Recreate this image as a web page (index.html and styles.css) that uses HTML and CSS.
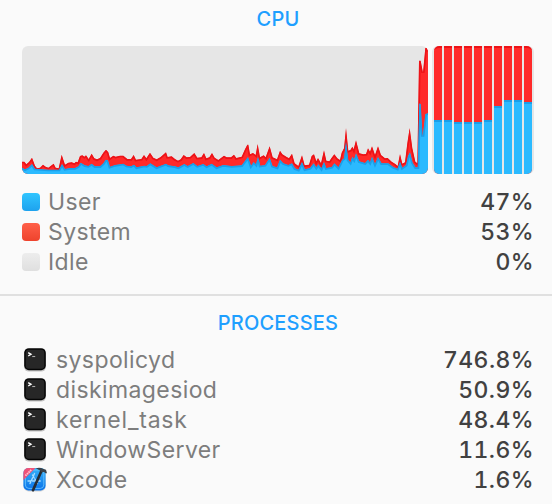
FILE: index.html
```html
<!DOCTYPE html>
<html lang="en">
<head>
<meta charset="utf-8">
<title>CPU</title>
<link rel="stylesheet" href="styles.css">
</head>
<body>
<svg class="defs" aria-hidden="true">
  <defs>
    <linearGradient id="face" x1="0" y1="0" x2="0" y2="1"><stop offset="0" stop-color="#38b4f8"/><stop offset="1" stop-color="#0870e8"/></linearGradient>
    <clipPath id="tile"><rect x=".4" y="1" width="22.2" height="22.4" rx="5"/></clipPath>
    <symbol id="terminal" viewBox="0 0 24 26">
      <rect x="1" y="2" width="22" height="22.6" rx="5" fill="#000" opacity=".22"/>
      <rect x="1.2" y="1.2" width="21.6" height="22" rx="4.6" fill="#050505"/>
      <rect x="2.7" y="2.7" width="18.6" height="19" rx="3" fill="#272727"/>
      <path d="M5.2 5.6 8 7.3 5.2 9" fill="none" stroke="#fff" stroke-width="1.4"/>
      <path d="M9.2 9.5h3" stroke="#aaa" stroke-width="1.1"/>
    </symbol>
    <symbol id="xcode" viewBox="0 0 24 26">
      <rect x=".6" y="2" width="22" height="22.5" rx="5" fill="#000" opacity=".15"/>
      <g clip-path="url(#tile)">
        <rect width="24" height="24" fill="url(#face)"/>
        <rect x="2.4" y="3" width="18.4" height="18.4" rx="3.5" fill="none" stroke="#70c8ff" stroke-width=".8"/>
        <path d="M11.5 6.5 7 16.5M9.5 8l5 8.5M5 14h13" fill="none" stroke="#a5dcff" stroke-width="1.4" stroke-linecap="round" stroke-dasharray="3 1.6"/>
        <path d="M0 1h12.5L0 13.500z" fill="#ef5278"/>
        <path d="M2.4 8.7 8.5 2.7" stroke="#ffc6d5" stroke-width="1.8" stroke-dasharray="1.6 .6"/>
      </g>
      <path d="M18.4 4 10 23.2" stroke="#262d35" stroke-width="2.7" stroke-linecap="round"/>
      <path d="M12.8 1.2c2.8-.9 5.2-.7 7.200.6l3 1 1 3.400-1.600.1-1.200-1.300-2.600.2-2-2z" fill="#39424b"/>
    </symbol>
  </defs>
</svg>
<main class="panel">
  <section class="cpu">
    <h2 class="title">CPU</h2>
    <div class="graphs">
      <svg class="history" viewBox="0 0 1218 384" preserveAspectRatio="none">
        <defs>
          <path id="total" d="M0 347 7 347 13 355 21 348 30 335 39 359 45 367 54 365 63 356 71 362 79 365 95 353 101 365 110 367 119 326 129 356 139 350 149 349 157 352 162 347 167 349 174 330 181 328 187 332 192 328 200 339 209 323 217 337 225 340 234 336 244 320 252 311 259 319 264 336 274 329 281 332 294 329 304 329 316 339 327 339 335 327 342 341 358 339 366 327 373 337 384 320 394 335 404 340 416 333 432 319 437 333 449 331 459 339 468 344 476 340 485 327 494 334 504 333 517 321 526 335 538 334 546 321 553 337 562 334 570 321 578 335 589 342 606 329 614 334 627 334 636 326 643 336 659 332 669 310 676 296 679 296 684 325 693 321 701 327 707 294 714 334 725 328 731 334 743 301 752 334 765 340 774 314 781 325 794 333 801 337 810 323 818 352 829 360 840 328 848 358 861 356 869 330 876 325 883 346 888 336 897 352 906 313 913 344 922 346 929 335 937 325 946 337 954 342 959 320 966 307 972 246 979 314 985 312 991 302 995 310 1002 283 1012 322 1024 325 1032 324 1038 307 1044 317 1050 301 1059 327 1068 301 1077 327 1089 337 1097 336 1109 347 1120 354 1127 360 1134 324 1141 353 1149 349 1156 292 1163 246 1171 307 1180 347 1186 352 1191 44 1196 44 1203 80 1210 5 1214 5 1218 12 1230 12 1230 400 -12 400 -12 347Z"/>
          <path id="user" d="M0 365 9 370 19 365 30 354 39 368 79 371 111 371 120 354 129 369 144 366 159 366 169 361 176 350 189 358 199 360 209 353 219 361 234 361 244 352 251 341 258 343 264 362 279 357 304 353 314 359 327 361 336 356 344 364 366 359 374 360 385 352 404 364 432 353 439 358 459 361 469 364 487 354 497 360 514 351 526 360 544 354 554 361 569 353 584 364 604 357 629 360 659 358 678 333 687 359 695 348 702 355 708 332 715 359 729 357 743 335 752 360 765 364 774 341 784 352 799 357 810 352 819 367 829 371 840 348 849 370 864 366 875 352 883 364 889 355 898 367 906 348 913 366 929 363 937 352 949 364 960 342 966 337 972 287 979 342 985 349 991 332 996 340 1002 322 1012 346 1029 351 1038 341 1044 349 1050 332 1059 353 1068 333 1079 352 1099 352 1114 363 1126 368 1134 347 1141 365 1152 357 1158 330 1164 319 1172 350 1181 364 1187 364 1192 172 1196 174 1202 272 1210 204 1218 202 1230 202 1230 400 -12 400 -12 365Z"/>
          <clipPath id="totalArea"><use href="#total"/></clipPath>
          <clipPath id="userArea"><use href="#user"/></clipPath>
        </defs>
        <use href="#total" class="system-area" clip-path="url(#totalArea)"/>
        <use href="#user" class="user-area" clip-path="url(#userArea)"/>
      </svg>
      <div class="cores">
        <div class="core"><i style="height:54px"></i></div>
        <div class="core"><i style="height:54px"></i></div>
        <div class="core"><i style="height:52px"></i></div>
        <div class="core"><i style="height:52px"></i></div>
        <div class="core"><i style="height:52px"></i></div>
        <div class="core"><i style="height:54px"></i></div>
        <div class="core"><i style="height:68px"></i></div>
        <div class="core"><i style="height:74px"></i></div>
        <div class="core"><i style="height:74px"></i></div>
        <div class="core"><i style="height:72px"></i></div>
      </div>
    </div>
    <div class="row"><span class="swatch user"></span><span class="name">User</span><b>47%</b></div>
    <div class="row"><span class="swatch system"></span><span class="name">System</span><b>53%</b></div>
    <div class="row"><span class="swatch idle"></span><span class="name">Idle</span><b>0%</b></div>
  </section>
  <section class="processes">
    <h2 class="title">PROCESSES</h2>
    <div class="row"><svg class="icon"><use href="#terminal"/></svg><span class="name">syspolicyd</span><b>746.8%</b></div>
    <div class="row"><svg class="icon"><use href="#terminal"/></svg><span class="name">diskimagesiod</span><b>50.9%</b></div>
    <div class="row"><svg class="icon"><use href="#terminal"/></svg><span class="name wide">kernel_task</span><b>48.4%</b></div>
    <div class="row"><svg class="icon"><use href="#terminal"/></svg><span class="name">WindowServer</span><b>11.6%</b></div>
    <div class="row"><svg class="icon"><use href="#xcode"/></svg><span class="name">Xcode</span><b>1.6%</b></div>
  </section>
</main>
</body>
</html>
```
FILE: styles.css
```css
* { box-sizing: border-box; }
body { margin: 0; background: #fafafa; font-family: Inter, "Liberation Sans", sans-serif; }
.defs { position: absolute; width: 0; height: 0; }
.panel { width: 552px; height: 504px; overflow: hidden; }
.cpu { height: 296px; border-bottom: 2px solid #e0e0e0; }
.title { margin: 0; height: 38px; line-height: 38px; padding-left: 4px; text-align: center; font-size: 20px; font-weight: 550; letter-spacing: .2px; color: #1e9fff; }
.graphs { display: flex; gap: 4px; height: 128px; margin: 8px 18px 13px 22px; }
.history { width: 406px; height: 128px; border-radius: 6px; background: #e6e6e6; }
.system-area { fill: #ff2a2a; stroke: #ec1318; stroke-width: 10; }
.user-area { fill: #2bbaff; stroke: #1a9fe9; stroke-width: 10; }
.cores { display: flex; gap: 2px; width: 102px; height: 128px; padding: 0 2px; border-radius: 6px; background: #e6e6e6; }
.core { display: flex; align-items: flex-end; width: 8px; overflow: hidden; background: #ff2a2a; border-top: 2px solid #ee1317; }
.core:first-child { border-radius: 5px 0 0 5px; }
.core:last-child { border-radius: 0 5px 5px 0; }
.core i { flex: 1; background: #2bbaff; border-top: 2px solid #1a9fe9; }
.row { display: flex; align-items: center; height: 30px; padding: 0 18px 0 22px; font-size: 23px; line-height: 30px; }
.name { color: #7d7d7d; letter-spacing: .4px; }
.name.wide { letter-spacing: .8px; }
.row b { margin-left: auto; font-weight: 550; color: #414141; letter-spacing: .4px; font-feature-settings: "tnum"; }
.swatch { width: 18px; height: 18px; margin-right: 8px; border-radius: 4px; }
.user { background: linear-gradient(#30c5ff, #1ea2ee); }
.system { background: linear-gradient(#ff6049, #ee432d); }
.idle { background: linear-gradient(#ededed, #dfdfdf); }
.processes { padding-top: 8px; }
.processes .title { height: 40px; margin-bottom: 1px; }
.icon { width: 24px; height: 26px; margin: 0 9px 0 1px; }
```
